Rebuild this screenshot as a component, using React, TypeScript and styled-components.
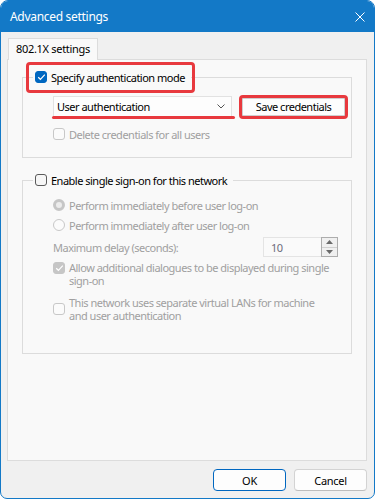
import React from "react";
import styled, { createGlobalStyle } from "styled-components";

const BLUE = "#1379C7";
const ACCENT = "#0067C0";
const RED = "#E8393E";
const LINE = "#DCDCDC";
const DIS = "#A0A0A0";
const FONT = `"Segoe UI", "Noto Sans", sans-serif`;

const Global = createGlobalStyle`
  html, body { margin: 0; padding: 0; background: #ffffff; }
  #root { width: 375px; height: 499px; }
  * { box-sizing: border-box; }
`;

const Window = styled.div`
  width: 375px;
  height: 499px;
  display: flex;
  flex-direction: column;
  background: #f0f0f0;
  border: 1px solid ${BLUE};
  border-radius: 8px 8px 7px 7px;
  overflow: hidden;
  font-family: ${FONT};
  font-size: 11px;
  letter-spacing: -0.5px;
  color: #000;
`;

const TitleBar = styled.div`
  height: 31px;
  flex: none;
  background: ${BLUE};
  display: flex;
  align-items: center;
  justify-content: space-between;
  padding: 0 9px 0 9px;
  color: #fff;
  font-size: 12px;
  letter-spacing: -0.3px;
`;

const CloseIcon = styled.svg`
  width: 10px;
  height: 10px;
  display: block;
`;

const Body = styled.div`
  flex: 1;
  display: flex;
  flex-direction: column;
  padding: 6px 7px 7px 6px;
  min-height: 0;
`;

const Tab = styled.div`
  align-self: flex-start;
  margin-left: 1px;
  margin-bottom: -1px;
  height: 22px;
  padding: 0 7px 2px 7px;
  display: flex;
  align-items: center;
  background: #f9f9f9;
  border: 1px solid ${LINE};
  border-bottom: none;
  position: relative;
  z-index: 1;
  letter-spacing: -0.3px;
`;

const Panel = styled.div`
  flex: 1;
  display: flex;
  flex-direction: column;
  background: #f9f9f9;
  border: 1px solid ${LINE};
  min-height: 0;
`;

const Group = styled.fieldset<{ $top: number; $pt: number; $pb: number }>`
  margin: ${(p) => p.$top}px 14px 0 14px;
  border: 1px solid ${LINE};
  padding: ${(p) => p.$pt}px 13px ${(p) => p.$pb}px 10px;
  min-width: 0;
`;

const Legend = styled.legend`
  padding: 0 6px 0 2px;
  height: 16px;
`;

const Indented = styled.div`
  padding-left: 20px;
  display: flex;
  flex-direction: column;
`;

const CheckRow = styled.label<{ $disabled?: boolean; $align?: string; $mt?: number }>`
  display: flex;
  align-items: ${(p) => p.$align ?? "center"};
  gap: 4px;
  min-height: 16px;
  line-height: 13px;
  margin-top: ${(p) => p.$mt ?? 0}px;
  color: ${(p) => (p.$disabled ? DIS : "#000")};
  white-space: nowrap;
`;

const Box = styled.span<{ $checked?: boolean; $disabled?: boolean; $mt?: number }>`
  flex: none;
  width: 12px;
  height: 12px;
  border-radius: 3px;
  margin-top: ${(p) => p.$mt ?? 0}px;
  display: flex;
  align-items: center;
  justify-content: center;
  border: 1px solid
    ${(p) =>
      p.$checked ? (p.$disabled ? "#c6c6c6" : ACCENT) : p.$disabled ? "#c8c8c8" : "#5a5a5a"};
  background: ${(p) =>
    p.$checked ? (p.$disabled ? "#c6c6c6" : ACCENT) : p.$disabled ? "#fbfbfb" : "#f6f6f6"};
`;

const Radio = styled.span<{ $checked?: boolean }>`
  flex: none;
  width: 12px;
  height: 12px;
  border-radius: 50%;
  border: ${(p) => (p.$checked ? "3.5px solid #c6c6c6" : "1px solid #c8c8c8")};
  background: ${(p) => (p.$checked ? "#ececec" : "#fbfbfb")};
`;

const Highlight = styled.span<{ $inset: string }>`
  position: relative;
  display: inline-flex;
  flex: none;
  &::after {
    content: "";
    position: absolute;
    inset: ${(p) => p.$inset};
    border: 3px solid ${RED};
    border-radius: 4px;
    pointer-events: none;
  }
`;

const ControlRow = styled.div`
  display: flex;
  align-items: center;
  gap: 10px;
`;

const Select = styled.div`
  position: relative;
  flex: none;
  width: 179px;
  height: 21px;
  background: #fdfdfd;
  border: 1px solid #e2e2e2;
  display: flex;
  align-items: center;
  justify-content: space-between;
  padding: 0 6px 0 3px;
  &::after {
    content: "";
    position: absolute;
    left: -2px;
    right: -4px;
    bottom: -3px;
    height: 3px;
    border-radius: 2px;
    background: ${RED};
  }
`;

const Chevron = styled.svg`
  width: 8px;
  height: 5px;
  display: block;
`;

const SmallButton = styled.div`
  width: 103px;
  height: 18px;
  background: #fdfdfd;
  border: 1px solid #cfcfcf;
  display: flex;
  align-items: center;
  justify-content: center;
`;

const RadioRow = styled.div<{ $mt?: number }>`
  display: flex;
  align-items: center;
  gap: 4px;
  height: 16px;
  margin-top: ${(p) => p.$mt ?? 0}px;
  color: ${DIS};
  white-space: nowrap;
`;

const DelayRow = styled.div`
  display: flex;
  align-items: center;
  justify-content: space-between;
  margin-top: 4px;
  color: ${DIS};
`;

const Spin = styled.div`
  display: flex;
  height: 20px;
`;

const SpinInput = styled.div`
  width: 58px;
  height: 20px;
  background: #fafafa;
  border: 1px solid #e4e4e4;
  border-right: none;
  display: flex;
  align-items: center;
  padding-left: 7px;
  color: #6c6c7c;
`;

const SpinButtons = styled.div`
  width: 17px;
  height: 20px;
  border: 1px solid #adadad;
  display: flex;
  flex-direction: column;
  background: #f0f0f0;
`;

const SpinHalf = styled.div<{ $top?: boolean }>`
  flex: 1;
  display: flex;
  align-items: center;
  justify-content: center;
  border-bottom: ${(p) => (p.$top ? "1px solid #d0d0d0" : "none")};
`;

const Arrow = styled.svg`
  width: 7px;
  height: 4px;
  display: block;
`;

const Footer = styled.div`
  flex: none;
  display: flex;
  justify-content: flex-end;
  gap: 8px;
  padding-top: 8px;
`;

const DialogButton = styled.div<{ $primary?: boolean }>`
  width: 73px;
  height: 22px;
  border-radius: 4px;
  background: #fdfdfd;
  border: 1px solid ${(p) => (p.$primary ? ACCENT : "#d3d3d3")};
  border-bottom-color: ${(p) => (p.$primary ? ACCENT : "#bdbdbd")};
  display: flex;
  align-items: center;
  justify-content: center;
  letter-spacing: -0.3px;
`;

const Check = () => (
  <svg width="9" height="8" viewBox="0 0 9 8">
    <polyline points="1.2,4.2 3.4,6.3 7.8,1.6" fill="none" stroke="#fff" strokeWidth="1.2" />
  </svg>
);

export default function App() {
  return (
    <>
      <Global />
      <Window>
        <TitleBar>
          <span>Advanced settings</span>
          <CloseIcon viewBox="0 0 10 10">
            <path d="M0.5 0.5 L9.5 9.5 M9.5 0.5 L0.5 9.5" stroke="#fff" strokeWidth="1" />
          </CloseIcon>
        </TitleBar>
        <Body>
          <Tab>802.1X settings</Tab>
          <Panel>
            <Group $top={9} $pt={11} $pb={15}>
              <Legend>
                <Highlight $inset="-7px -10px -8px -9px">
                  <CheckRow>
                    <Box $checked>
                      <Check />
                    </Box>
                    Specify authentication mode
                  </CheckRow>
                </Highlight>
              </Legend>
              <Indented>
                <ControlRow>
                  <Select>
                    <span>User authentication</span>
                    <Chevron viewBox="0 0 8 5">
                      <polyline points="0.5,0.5 4,4 7.5,0.5" fill="none" stroke="#555" strokeWidth="1" />
                    </Chevron>
                  </Select>
                  <Highlight $inset="-3px">
                    <SmallButton>Save credentials</SmallButton>
                  </Highlight>
                </ControlRow>
                <CheckRow $disabled $mt={9}>
                  <Box $disabled />
                  Delete credentials for all users
                </CheckRow>
              </Indented>
            </Group>

            <Group $top={14} $pt={9} $pb={31}>
              <Legend>
                <CheckRow>
                  <Box />
                  Enable single sign-on for this network
                </CheckRow>
              </Legend>
              <Indented>
                <RadioRow>
                  <Radio $checked />
                  Perform immediately before user log-on
                </RadioRow>
                <RadioRow $mt={4}>
                  <Radio />
                  Perform immediately after user log-on
                </RadioRow>
                <DelayRow>
                  <span>Maximum delay (seconds):</span>
                  <Spin>
                    <SpinInput>10</SpinInput>
                    <SpinButtons>
                      <SpinHalf $top>
                        <Arrow viewBox="0 0 7 4">
                          <polygon points="0,4 3.5,0 7,4" fill="#6a6a6a" />
                        </Arrow>
                      </SpinHalf>
                      <SpinHalf>
                        <Arrow viewBox="0 0 7 4">
                          <polygon points="0,0 7,0 3.5,4" fill="#6a6a6a" />
                        </Arrow>
                      </SpinHalf>
                    </SpinButtons>
                  </Spin>
                </DelayRow>
                <CheckRow $disabled $align="flex-start" $mt={4}>
                  <Box $checked $disabled $mt={1}>
                    <Check />
                  </Box>
                  <span>
                    Allow additional dialogues to be displayed during single
                    <br />
                    sign-on
                  </span>
                </CheckRow>
                <CheckRow $disabled $mt={9}>
                  <Box $disabled />
                  <span>
                    This network uses separate virtual LANs for machine
                    <br />
                    and user authentication
                  </span>
                </CheckRow>
              </Indented>
            </Group>
          </Panel>
          <Footer>
            <DialogButton $primary>OK</DialogButton>
            <DialogButton>Cancel</DialogButton>
          </Footer>
        </Body>
      </Window>
    </>
  );
}
